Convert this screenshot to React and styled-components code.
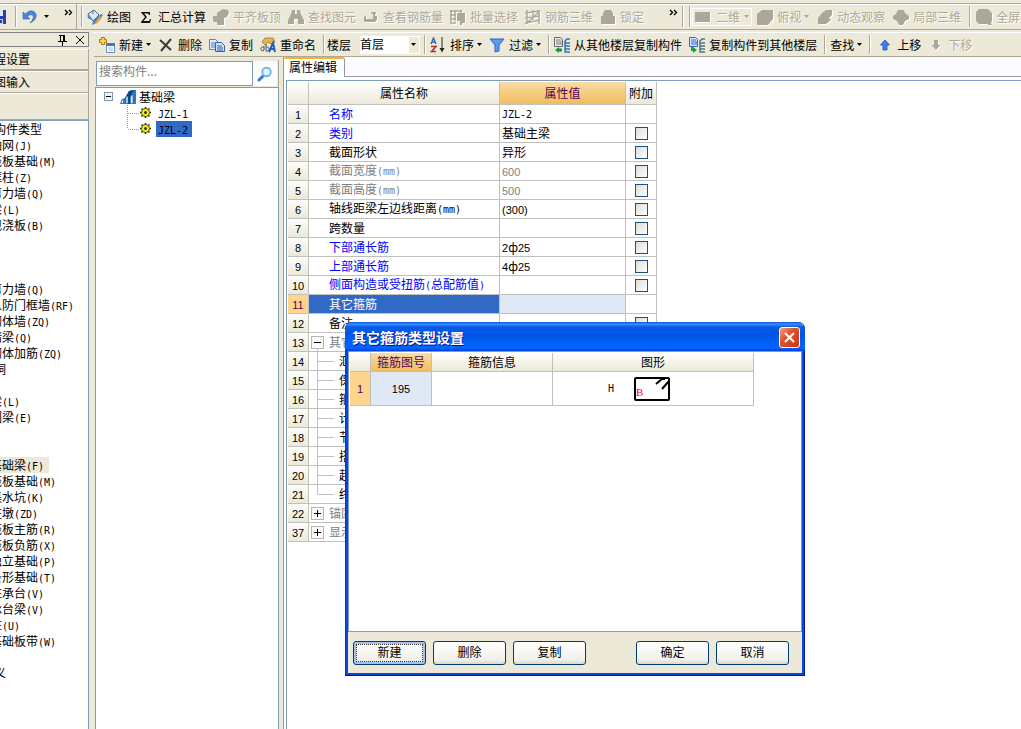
import React from "react";
import styled, { createGlobalStyle, css } from "styled-components";

const face = "#ece9d8";
const shade = "#aca899";
const edge = "#7f9db9";
const grid = "#c0c0c0";
const mute = "#808080";

const GlobalStyle = createGlobalStyle`
  * { box-sizing: border-box; }
  body {
    margin: 0;
    background: ${face};
    color: #000;
    font: 12px/16px "Noto Sans CJK SC", sans-serif;
    overflow: hidden;
  }
  button, input, select { font: inherit; color: inherit; margin: 0; }
`;

const Page = styled.div`
  position: relative;
  display: flex;
  flex-direction: column;
  height: 100vh;
  overflow: hidden;
`;

/* ---------- text ---------- */

const Latin = styled.span`
  font-family: "DejaVu Sans Mono", monospace;
  font-size: 10px;
`;

const Num = styled.span`
  font-family: "Liberation Sans", sans-serif;
  font-size: 11px;
`;

function Mixed({ children }) {
  return children.split(/([\x21-\x7e]+)/).map((part, i) => {
    if (i % 2 === 0) return part;
    return /^[\d()]+$/.test(part) && /\d/.test(part)
      ? <Num key={i}>{part}</Num>
      : <Latin key={i}>{part}</Latin>;
  });
}

/* ---------- toolbars ---------- */

const TopBar = styled.header`
  display: flex;
  flex: none;
  height: 27px;
  margin-top: 3px;
  border-top: 1px solid ${shade};
  border-bottom: 1px solid ${shade};
  box-shadow: inset 0 1px #fff;
  overflow: hidden;
`;

const ToolBar = styled.div`
  display: flex;
  flex: none;
  align-items: center;
  height: 25px;
  padding-left: 1px;
  border-top: 1px solid #fff;
  border-bottom: 1px solid ${shade};
  overflow: hidden;
`;

const FileGroup = styled.div`
  display: flex;
  flex: none;
  align-items: center;
  width: 77px;
  padding-right: 3px;
  border-right: 1px solid ${shade};
  overflow: hidden;
`;

const ToolGroup = styled.div`
  display: flex;
  flex: none;
  align-items: center;
  padding-left: 4px;
`;

const Grip = styled.span`
  align-self: stretch;
  flex: none;
  width: 2px;
  margin: 2px 0;
  border-left: 1px solid ${shade};
  border-right: 1px solid #fff;
`;

const Sep = styled(Grip)`
  margin-left: 4px;
  margin-right: ${(p) => (p.$wide ? 2 : 0)}px;
`;

const ToolButton = styled.button`
  display: flex;
  flex: none;
  align-items: center;
  gap: 4px;
  height: 20px;
  padding: 0 3px 0 4px;
  border: 0;
  background: none;
  white-space: nowrap;
  line-height: 16px;
  ${(p) => p.disabled && css`
    color: ${shade};
    text-shadow: 1px 1px #fff;
  `}
  ${(p) => p.$framed && css`
    gap: 5px;
    height: 18px;
    padding: 0 2px;
    border: 1px solid #fff;
  `}
`;

const Save = styled(ToolButton)`
  margin-left: -13px;
  padding-right: 8px;
`;

const Undo = styled(ToolButton)`
  gap: 7px;
  padding-left: 5px;
`;

const Chevrons = styled.svg`
  flex: none;
  align-self: flex-start;
  margin: 5px 0 0 ${(p) => p.$space}px;
`;

const CaretMark = styled.svg`
  flex: none;
  margin-left: -1px;
`;

const Caret = () => (
  <CaretMark width="5" height="3" viewBox="0 0 5 3" aria-hidden="true">
    <path d="M0 0h5L2.500 3z" fill="currentColor" />
  </CaretMark>
);

const More = ({ space }) => (
  <Chevrons $space={space} width="9" height="7" viewBox="0 0 9 7" aria-hidden="true">
    <path d="M1 1l2.500 2.500L1 6M5 1l2.500 2.500L5 6" fill="none" stroke="#000" strokeWidth="1.400" />
  </Chevrons>
);

const art = {
  save: <><path d="M0 1h15v14H2L0 13z" fill="#2b3fa8" /><path d="M3 1h9v6H3z" fill="#dfe8fb" /><path d="M4 10h8v5H4z" fill="#c9cfe0" /><path d="M9 11h2v3H9z" fill="#2b3fa8" /></>,
  undo: <path d="M1 3v7h7L5.600 7.500C9 4 12.500 6 11 9.500 10.400 11.500 9 13 8 14 14 11.500 16 6 12.500 3 9.500 .8 6 2 3.500 5z" fill="#4a86d8" stroke="#2f62b5" strokeWidth=".6" />,
  paint: <><path d="M1 5l6-4 5 5-6 6z" fill="#dce9f7" stroke="#47698f" /><path d="M6 5V1" stroke="#47698f" /><path d="M1 5c-1 3 0 5 2 5l3 2z" fill="#5b87bd" /><path d="M14 5l2 1-6 8-5 2 1-4z" fill="#4f81c0" /><path d="M13 7l2 2-5 5-3 1z" fill="#e3a02f" /></>,
  sigma: <path d="M3 3h9v3h-1l-1-1.500H6L9 8l-3.500 4H11l1-2h1l-1 4H3v-1l4-5-4-4.500z" fill="#111" />,
  level: <path d="M0 7h4V4l6-4 5 1 1 3-2 4-3 1v7H4v-3H1l-1-1z" fill={shade} />,
  find: <path d="M4 1h3v4h2V1h3l1 4 3 6v4h-6v-5H6v5H0v-4l3-6z" fill={shade} />,
  bars: <path d="M1 8l2-2v4h7V5H8l1-2h4l-1 4h2v4l-2 2H2l-1-1z" fill={shade} />,
  batch: <><path d="M1 1v12M5 1v11M0 2h12M0 6h6M0 10h6M0 14h6M11 1v3" fill="none" stroke={shade} strokeWidth="1.500" /><path d="M7 4h8v10h-3v2h-2v-4H7z" fill={shade} /></>,
  mesh: <path d="M2 1v14M8 1v10M14 1v14M0 4l15-2M0 9l15-2M0 14l15-3M3 13L14 3" fill="none" stroke={shade} strokeWidth="1.500" />,
  lock: <path d="M1 7h2V4l2-3h6l2 3v3h2v8H1z" fill={shade} />,
  flat: <path d="M0 3h15v10H0z" fill={shade} />,
  box: <path d="M0 5l5-4h11v9l-5 6H0z" fill={shade} />,
  orbit: <path d="M1 9l4-5 4-3h6v5l-3 3 2 2-5 4H1z" fill={shade} />,
  part: <path d="M5 1h6l1 3 4 3v3l-4 2-2 4H6l-2-4-4-2V7l3-2z" fill={shade} />,
  full: <path d="M3 0h9l4 4v8l-1 2 1 2h-3l-2-1H3L0 12V3z" fill={shade} />,
  create: <><path d="M2.500 .5h3v2h2v3h-2v2h-3v-2h-2v-3h2z" fill="#f8d54a" stroke="#a77b10" /><path d="M7.500 6.500h8v9h-8z" fill="#fff" stroke="#6b8fc0" /><path d="M7 6h9v3H7z" fill="#3f79c4" /><path d="M9 11h5M9 13h5" stroke="#9bbbe0" /></>,
  remove: <path d="M2 3l11 10M13 2L3 14" stroke="#3b3b3b" strokeWidth="2" fill="none" />,
  copy: <><path d="M.5 2.500h6l3 3v7h-9z" fill="#dceafb" stroke="#5585c9" /><path d="M2 6h4M2 8h4M2 10h4" stroke="#5585c9" /><path d="M6.500 5.500h6l3 3v6h-9z" fill="#cfe2fa" stroke="#2f62b5" /><path d="M8 9h5M8 11h6M8 13h6" stroke="#2f62b5" /></>,
  rename: <><path d="M2 5l3-4h8l2 4-4 2-3-2-3 3z" fill="#e9b53d" stroke="#7a6a4a" strokeWidth=".7" /><path d="M4 10c-4-1-4 4-1 4l1-1v-4M6 7v7c4 1 4-5 0-4" fill="none" stroke="#555" /><path d="M9 15l4-9 2 9M10 12h5" fill="none" stroke="#1f5fc0" strokeWidth="2" /></>,
  sort: <><path d="M1 7l2.500-6L6 7M2 5h3" fill="none" stroke="#3c62b4" strokeWidth="1.400" /><path d="M1 9.500h5L1.500 14.500H6" fill="none" stroke="#a8343a" strokeWidth="1.500" /><path d="M12 0v13" stroke="#222" /><path d="M9.500 11h5L12 15.500z" fill="#222" /></>,
  filter: <path d="M1 2h14l-5 6v6l-4 1V8z" fill="#5b9bf0" stroke="#2c62c4" />,
  fromFloor: <><path d="M.5 .5h6l2 2v7h-8z" fill="#eee" stroke="#666" /><path d="M2 3h5M2 5h6M2 7h6" stroke="#777" /><path d="M16 2h-3l-2 2v11h5M11 6h5M11 9h5M11 12h5" fill="none" stroke="#3172bd" strokeWidth="1.500" /><path d="M1 13l4-3v1.500h3v3H5V16z" fill="#16943a" /></>,
  toFloor: <><path d="M.5 .5h6l2 2v7h-8z" fill="#d8e8ff" stroke="#3568bd" /><path d="M2 3h5M2 5h6M2 7h6" stroke="#3568bd" /><path d="M16 2h-3l-2 2v11h5M11 6h5M11 9h5M11 12h5" fill="none" stroke="#56718f" strokeWidth="1.500" /><path d="M2 10v4h2v2l4-3-4-3z" fill="#16a03a" /></>,
  up: <path d="M8 3l4.500 5H10v5H6V8H3.500z" fill="#3f7df0" stroke="#1c4fc0" strokeWidth=".8" />,
  down: <path d="M8 13L3.500 8H6V3h4v5h2.500z" fill={shade} />,
  lens: <><path d="M2 14l5-5" stroke="#3a78c8" strokeWidth="3" strokeLinecap="round" /><circle cx="9.500" cy="6" r="4.200" fill="#eaf6ff" stroke="#6db7ef" strokeWidth="2" /></>,
  beam: <><path d="M0 15l2-5 3-1 4-7 3-1h4v14z" fill="#2f7abf" /><path d="M5 9l4-7 5-1-4 7v7H8V9z" fill="#0d4683" /><path d="M1.500 14.500v-3l2-1V14.500zM6 14.500V8l2-1v7.500zM10.500 14.500V8l2.500-3v9.500z" fill="#e2f1fc" stroke="#155a9d" strokeWidth=".6" /></>,
  pin: <path d="M5 3.500h6M6.500 4v5M9.500 4v5M10.500 4v5M4 9.500h9M8.500 10v4" fill="none" stroke="#000" />,
  close: <path d="M4 4l8 8M12 4l-8 8" fill="none" stroke="#000" />,
};

const Glyph = styled.svg`
  flex: none;
  display: block;
  ${(p) => p.$off && "filter: drop-shadow(1px 1px 0 #fff);"}
`;

const Icon = ({ name, off }) => (
  <Glyph width="16" height="16" viewBox="0 0 16 16" $off={off} aria-hidden="true">{art[name]}</Glyph>
);

const Tool = ({ icon, label, off, menu, framed }) => (
  <ToolButton type="button" disabled={off} $framed={framed}>
    {icon && <Icon name={icon} off={off} />}
    {label}
    {menu && <Caret />}
  </ToolButton>
);

const ViewGroup = styled(ToolGroup)`
  gap: 1px;
`;

const FloorLabel = styled.label`
  display: flex;
  flex: none;
  align-items: center;
  gap: 9px;
  padding-left: 2px;
`;

const SelectBox = styled.span`
  position: relative;
  display: block;
  width: 60px;
  height: 18px;
`;

const Select = styled.select`
  appearance: none;
  display: block;
  width: 100%;
  height: 100%;
  padding: 0 14px 2px 0;
  border: 0;
  border-radius: 0;
  background: #fff;
`;

const SelectArrow = styled.span`
  position: absolute;
  top: 1px;
  right: 1px;
  display: grid;
  place-items: center;
  width: 10px;
  height: 16px;
  background: ${face};
  pointer-events: none;
`;

/* ---------- left navigation ---------- */

const Body = styled.div`
  display: flex;
  flex: 1;
  min-height: 0;
`;

const Side = styled.aside`
  display: flex;
  flex-direction: column;
  flex: none;
  width: 94px;
  padding: 2px 5px 0 0;
  overflow: hidden;
`;

const SideTitle = styled.div`
  display: flex;
  flex: none;
  justify-content: flex-end;
  align-items: center;
  gap: 2px;
  height: 15px;
  border: solid ${mute};
  border-width: 1px 1px 1px 0;
  margin-bottom: 2px;
`;

const PlainButton = styled.button`
  display: block;
  padding: 0;
  border: 0;
  background: none;
`;

const SideButton = styled.button`
  flex: none;
  height: ${(p) => (p.$tall ? 27 : 22)}px;
  padding: 0;
  border: solid ${shade};
  border-width: 0 1px ${(p) => (p.$strong ? 2 : 1)}px 0;
  box-shadow: inset 0 1px #fff;
  background: ${face};
  text-align: left;
  text-indent: -6px;
  line-height: 16px;
`;

const KindList = styled.ul`
  flex: 1;
  margin: 0;
  padding: 0;
  list-style: none;
  border: solid ${edge};
  border-width: 1px 1px 0 0;
  background: #fff;
  overflow: hidden;
`;

const Kind = styled.li`
  width: fit-content;
  height: 16px;
  margin-left: ${(p) => (p.$root ? -6 : -10)}px;
  padding-right: 5px;
  white-space: nowrap;
  background: ${(p) => (p.$on ? face : "none")};
`;

const kinds = [
  "#构件类型", "轴网(J)", "筏板基础(M)", "框柱(Z)", "剪力墙(Q)", "梁(L)", "现浇板(B)",
  "", "", "", "剪力墙(Q)", "人防门框墙(RF)", "砌体墙(ZQ)", "暗梁(Q)", "砌体加筋(ZQ)", "#洞",
  "", "梁(L)", "圈梁(E)", "", "", "基础梁(F)", "筏板基础(M)", "集水坑(K)", "柱墩(ZD)",
  "筏板主筋(R)", "筏板负筋(X)", "独立基础(P)", "条形基础(T)", "桩承台(V)", "承台梁(V)",
  "桩(U)", "基础板带(W)", "", "#义",
];

/* ---------- component tree ---------- */

const Main = styled.main`
  display: flex;
  flex-direction: column;
  flex: 1;
  min-width: 0;
  padding-top: 2px;
`;

const Split = styled.div`
  display: flex;
  flex: 1;
  min-height: 0;
`;

const Explorer = styled.section`
  display: flex;
  flex-direction: column;
  flex: none;
  width: 184px;
  margin: 3px 4px 0 1px;
`;

const SearchRow = styled.div`
  display: flex;
  flex: none;
  height: 27px;
  padding: 1px;
  border-right: 1px solid ${shade};
`;

const Search = styled.input`
  flex: 1;
  min-width: 0;
  padding: 0 2px 5px;
  border: 1px solid ${edge};
  border-radius: 0;
  background: #fff;
  &::placeholder { color: ${mute}; opacity: 1; }
`;

const SearchButton = styled(PlainButton)`
  display: grid;
  place-items: center;
  width: 24px;
  background: #fbfcfe;
`;

const Tree = styled.div`
  flex: 1;
  padding: 0 0 0 8px;
  border: solid ${edge};
  border-width: 1px 1px 0;
  background: #fff;
`;

const TreeRoot = styled.div`
  display: flex;
  align-items: center;
  height: 17px;
  gap: 3px;
`;

const Fold = styled.svg`
  flex: none;
  margin-right: 4px;
`;

const Branch = styled.ul`
  margin: 0 0 0 22px;
  padding: 0;
  list-style: none;
`;

const Leaf = styled.li`
  display: flex;
  align-items: center;
  gap: 4px;
  height: 16px;
`;

const LeafName = styled.span`
  height: 16px;
  padding: 0 4px 0 2px;
  line-height: 15px;
  background: ${(p) => (p.$on ? "#316ac5" : "none")};
`;

const LeafMark = ({ last }) => (
  <svg width="26" height="16" viewBox="0 0 26 16" aria-hidden="true">
    <path d={last ? "M1.500 0v8M2 8.500h11" : "M1.500 0v16M2 8.500h11"} fill="none" stroke="#999" strokeDasharray="1 1" />
    <path d="M19.500 2v11M14 7.500h11M15.500 3.500l8 8M23.500 3.500l-8 8" stroke="#222" strokeWidth="1.600" />
    <circle cx="19.500" cy="7.500" r="4" fill="#f8f010" stroke="#5a5510" />
    <circle cx="19.500" cy="7.500" r="1.500" fill="#3a3600" />
  </svg>
);

/* ---------- property editor ---------- */

const Editor = styled.section`
  display: flex;
  flex-direction: column;
  flex: 1;
  min-width: 0;
  border-left: 1px solid #919b9c;
  background: #fff;
`;

const Tabs = styled.div`
  display: flex;
  flex: none;
  height: 20px;
  border-bottom: 1px solid #919b9c;
  background: #fcfcfe;
`;

const Tab = styled.button`
  height: 20px;
  padding: 0 7px 2px 5px;
  border: 0;
  border-top: 2px solid #f9b032;
  border-right: 1px solid #919b9c;
  border-radius: 2px 3px 0 0;
  background: #fff;
  line-height: 14px;
`;

const Sheet = styled.div`
  flex: 1;
  margin: 3px 0 0 2px;
  padding: 1px 0 0 1px;
  border: solid ${edge};
  border-width: 1px 0 0 1px;
  overflow: hidden;
`;

const Table = styled.table`
  table-layout: fixed;
  width: ${(p) => p.$width}px;
  border-spacing: 0;
  th, td {
    padding: 0;
    border-right: 1px solid ${grid};
    border-bottom: 1px solid ${grid};
    font-weight: normal;
    line-height: 16px;
    white-space: nowrap;
    overflow: hidden;
  }
`;

const Col = styled.col`
  width: ${(p) => p.$w}px;
`;

const Head = styled.th`
  height: ${(p) => p.$h}px;
  color: ${(p) => (p.$hot ? "#5a0050" : "#000")};
  background: ${(p) => (p.$hot
    ? "linear-gradient(#f9dca8, #f0bd5c)"
    : `linear-gradient(#fff, ${face})`)};
`;

const RowHead = styled.th`
  height: ${(p) => p.$h || 19}px;
  color: ${(p) => (p.$hot ? "#5a0050" : "#000")};
  background: ${(p) => (p.$hot ? "#ffd48c" : `linear-gradient(#fdfdfb, ${face})`)};
`;

const tones = { blue: "#0000ff", gray: mute, white: "#fff" };

const NameCell = styled.td`
  height: 19px;
  color: ${(p) => tones[p.$tone] || "#000"};
  background: ${(p) => (p.$tone === "white" ? "#316ac5" : "#fff")};
`;

const NameLine = styled.div`
  display: flex;
  align-items: center;
  height: 18px;
  padding-left: ${(p) => (p.$plain ? 20 : 0)}px;
`;

const ValueCell = styled.td`
  && { padding-left: 2px; }
  color: ${(p) => tones[p.$tone] || "#000"};
  background: ${(p) => (p.$on ? "#dfe8f5" : "#fff")};
`;

const CheckCell = styled.td`
  text-align: center;
`;

const Check = styled.input`
  appearance: none;
  display: block;
  width: 13px;
  height: 13px;
  margin: 0 auto;
  border: 1px solid #1c5180;
  background: linear-gradient(135deg, #dcdcd7, #fff);
`;

const Gutter = ({ kind }) => {
  const w = kind === "item" || kind === "last" ? 30 : 20;
  return (
    <svg width={w} height="18" viewBox={`0 0 ${w} 18`} aria-hidden="true">
      {w === 20 ? (
        <>
          <rect x="2.500" y="3.500" width="12" height="12" fill="#fafaf7" stroke="#b5b5b5" />
          <path d={kind === "plus" ? "M5 9.500h7M8.500 6v7" : "M5 9.500h7"} stroke="#000" />
          {kind === "minus" && <path d="M8.500 16v2" stroke={grid} />}
        </>
      ) : (
        <path d={kind === "item" ? "M8.500 0v18M9 9.500h16" : "M8.500 0v9.500H25"} fill="none" stroke={grid} />
      )}
    </svg>
  );
};

const rows = [
  { n: 1, name: "名称", tone: "blue", value: "JZL-2", noCheck: true },
  { n: 2, name: "类别", tone: "blue", value: "基础主梁" },
  { n: 3, name: "截面形状", value: "异形" },
  { n: 4, name: "截面宽度(mm)", tone: "gray", value: "600" },
  { n: 5, name: "截面高度(mm)", tone: "gray", value: "500" },
  { n: 6, name: "轴线距梁左边线距离(mm)", value: "(300)" },
  { n: 7, name: "跨数量", value: "" },
  { n: 8, name: "下部通长筋", tone: "blue", value: "2ф25" },
  { n: 9, name: "上部通长筋", tone: "blue", value: "4ф25" },
  { n: 10, name: "侧面构造或受扭筋(总配筋值)", tone: "blue", value: "" },
  { n: 11, name: "其它箍筋", tone: "white", value: "", on: true, noCheck: true },
  { n: 12, name: "备注", value: "" },
  { n: 13, name: "其它", tone: "gray", kind: "minus", noCheck: true },
  { n: 14, name: "汇", kind: "item" },
  { n: 15, name: "保", kind: "item" },
  { n: 16, name: "箍", kind: "item" },
  { n: 17, name: "计", kind: "item" },
  { n: 18, name: "节", kind: "item" },
  { n: 19, name: "搭", kind: "item" },
  { n: 20, name: "起", kind: "item" },
  { n: 21, name: "终", kind: "last" },
  { n: 22, name: "锚固", tone: "gray", kind: "plus", noCheck: true },
  { n: 37, name: "显示", tone: "gray", kind: "plus", noCheck: true },
];

/* ---------- dialog ---------- */

const Dialog = styled.section`
  position: absolute;
  left: 345px;
  top: 322px;
  display: flex;
  flex-direction: column;
  width: 460px;
  height: 354px;
  padding: 0 3px 3px;
  border-radius: 7px 7px 0 0;
  background: #0a46e0;
  box-shadow: inset -1px -1px #00138c, inset 1px 0 #0831d9;
`;

const TitleBar = styled.div`
  display: flex;
  flex: none;
  align-items: center;
  justify-content: space-between;
  height: 29px;
  margin: 0 -3px;
  padding: 1px 5px 0 7px;
  border-radius: 7px 7px 0 0;
  background: linear-gradient(#0a4fd0 0, #3a92ff 2px, #0a5be8 5px, #0054e3 12px, #0062f8 22px, #0066ff 26px, #003dd7 29px);
`;

const Title = styled.h2`
  margin: 0;
  color: #fff;
  font-size: 14px;
  font-weight: bold;
  line-height: 16px;
  text-shadow: 1px 1px #0f1089;
`;

const CloseButton = styled.button`
  display: grid;
  place-items: center;
  width: 21px;
  height: 21px;
  padding: 0;
  border: 1px solid #fff;
  border-radius: 3px;
  background: linear-gradient(135deg, #f0a088, #e0502c 40%, #c8380c);
`;

const DialogSheet = styled.div`
  flex: 1;
  padding: 1px 0 0 1px;
  border: 1px solid ${edge};
  background: #fff;
`;

const NumberCell = styled.td`
  text-align: center;
  background: #dfe8f5;
`;

const ShapeLine = styled.div`
  display: flex;
  align-items: center;
  justify-content: center;
  gap: 20px;
  padding-right: 28px;
`;

const DialogFooter = styled.div`
  display: flex;
  flex: none;
  justify-content: space-between;
  align-items: flex-start;
  height: 41px;
  padding: 9px 13px 0 5px;
  background: ${face};
`;

const ButtonSet = styled.div`
  display: flex;
  gap: 7px;
`;

const PushButton = styled.button`
  width: 73px;
  height: 24px;
  padding: 0 0 2px;
  border: 1px solid #003c74;
  border-radius: 3px;
  background: linear-gradient(#fff, #f1f0ea 80%, #dcd8cc);
  line-height: 16px;
  ${(p) => p.$default && css`
    box-shadow: inset 0 0 0 2px #a6c0f0, inset 0 -2px #6982ee;
    outline: 1px dotted #333;
    outline-offset: -4px;
  `}
`;

export default function App() {
  return (
    <Page>
      <GlobalStyle />
      <TopBar>
        <FileGroup>
          <Save type="button" aria-label="保存"><Icon name="save" /></Save>
          <Grip />
          <Undo type="button" aria-label="撤销"><Icon name="undo" /><Caret /></Undo>
          <More space={12} />
        </FileGroup>
        <ToolGroup>
          <Grip />
          <Tool icon="paint" label="绘图" />
          <Tool icon="sigma" label="汇总计算" />
          <Tool icon="level" label="平齐板顶" off />
          <Tool icon="find" label="查找图元" off />
          <Tool icon="bars" label="查看钢筋量" off />
          <Tool icon="batch" label="批量选择" off />
          <Tool icon="mesh" label="钢筋三维" off />
          <Tool icon="lock" label="锁定" off />
          <More space={22} />
        </ToolGroup>
        <ViewGroup>
          <Grip />
          <Sep />
          <Tool icon="flat" label="二维" off menu framed />
          <Tool icon="box" label="俯视" off menu />
          <Tool icon="orbit" label="动态观察" off />
          <Tool icon="part" label="局部三维" off />
          <Sep />
          <Tool icon="full" label="全屏" off />
        </ViewGroup>
      </TopBar>
      <Body>
        <Side>
          <SideTitle>
            <PlainButton type="button" aria-label="固定"><Icon name="pin" /></PlainButton>
            <PlainButton type="button" aria-label="关闭面板"><Icon name="close" /></PlainButton>
          </SideTitle>
          <SideButton type="button" $strong>程设置</SideButton>
          <SideButton type="button">图输入</SideButton>
          <SideButton type="button" $tall aria-label="构件" />
          <KindList>
            {kinds.map((k, i) => (
              <Kind key={i} $root={k[0] === "#"} $on={i === 21}>
                <Mixed>{k.replace("#", "")}</Mixed>
              </Kind>
            ))}
          </KindList>
        </Side>
        <Main>
          <ToolBar>
            <Tool icon="create" label="新建" menu />
            <Tool icon="remove" label="删除" />
            <Tool icon="copy" label="复制" />
            <Tool icon="rename" label="重命名" />
            <Sep />
            <FloorLabel>
              楼层
              <SelectBox>
                <Select defaultValue="首层"><option>首层</option></Select>
                <SelectArrow><Caret /></SelectArrow>
              </SelectBox>
            </FloorLabel>
            <Sep />
            <Tool icon="sort" label="排序" menu />
            <Tool icon="filter" label="过滤" menu />
            <Sep />
            <Tool icon="fromFloor" label="从其他楼层复制构件" />
            <Tool icon="toFloor" label="复制构件到其他楼层" />
            <Sep />
            <Tool label="查找" menu />
            <Sep $wide />
            <Tool icon="up" label="上移" />
            <Tool icon="down" label="下移" off />
          </ToolBar>
          <Split>
            <Explorer>
              <SearchRow>
                <Search type="text" placeholder="搜索构件..." aria-label="搜索构件" />
                <SearchButton type="button" aria-label="搜索"><Icon name="lens" /></SearchButton>
              </SearchRow>
              <Tree>
                <TreeRoot>
                  <Fold width="9" height="9" viewBox="0 0 9 9" aria-hidden="true">
                    <rect x=".5" y=".5" width="8" height="8" fill="#f6f5ef" stroke="#7898b5" />
                    <path d="M2 4.500h5" stroke="#000" />
                  </Fold>
                  <Icon name="beam" />
                  基础梁
                </TreeRoot>
                <Branch>
                  <Leaf><LeafMark /><LeafName><Mixed>JZL-1</Mixed></LeafName></Leaf>
                  <Leaf><LeafMark last /><LeafName $on><Mixed>JZL-2</Mixed></LeafName></Leaf>
                </Branch>
              </Tree>
            </Explorer>
            <Editor>
              <Tabs><Tab type="button">属性编辑</Tab></Tabs>
              <Sheet>
                <Table $width={369}>
                  <colgroup><Col $w={21} /><Col $w={191} /><Col $w={126} /><Col $w={31} /></colgroup>
                  <thead>
                    <tr>
                      <Head $h={23} />
                      <Head $h={23}>属性名称</Head>
                      <Head $h={23} $hot>属性值</Head>
                      <Head $h={23}>附加</Head>
                    </tr>
                  </thead>
                  <tbody>
                    {rows.map((r) => (
                      <tr key={r.n}>
                        <RowHead $hot={r.on}><Num>{r.n}</Num></RowHead>
                        <NameCell $tone={r.tone}>
                          <NameLine $plain={!r.kind}>
                            {r.kind && <Gutter kind={r.kind} />}
                            <span><Mixed>{r.name}</Mixed></span>
                          </NameLine>
                        </NameCell>
                        <ValueCell $tone={r.tone === "gray" ? "gray" : ""} $on={r.on}>
                          <Mixed>{r.value || ""}</Mixed>
                        </ValueCell>
                        <CheckCell>
                          {!r.noCheck && <Check type="checkbox" aria-label={`附加 ${r.name}`} />}
                        </CheckCell>
                      </tr>
                    ))}
                  </tbody>
                </Table>
              </Sheet>
            </Editor>
          </Split>
        </Main>
      </Body>
      <Dialog role="dialog" aria-labelledby="dialog-title">
        <TitleBar>
          <Title id="dialog-title">其它箍筋类型设置</Title>
          <CloseButton type="button" aria-label="关闭">
            <svg width="13" height="13" viewBox="0 0 13 13" aria-hidden="true">
              <path d="M2 2l9 9M11 2l-9 9" stroke="#fff" strokeWidth="2.200" />
            </svg>
          </CloseButton>
        </TitleBar>
        <DialogSheet>
          <Table $width={404}>
            <colgroup><Col $w={21} /><Col $w={61} /><Col $w={121} /><Col $w={201} /></colgroup>
            <thead>
              <tr>
                <Head $h={19} />
                <Head $h={19} $hot>箍筋图号</Head>
                <Head $h={19}>箍筋信息</Head>
                <Head $h={19}>图形</Head>
              </tr>
            </thead>
            <tbody>
              <tr>
                <RowHead $h={34} $hot><Num>1</Num></RowHead>
                <NumberCell><Num>195</Num></NumberCell>
                <td />
                <td>
                  <ShapeLine>
                    <Latin>H</Latin>
                    <svg width="36" height="24" viewBox="0 0 36 24" aria-hidden="true">
                      <rect x="1" y="1" width="34" height="22" rx="1" fill="none" stroke="#000" strokeWidth="2" />
                      <path d="M22 7l6-5h3M28 12l7-8" fill="none" stroke="#000" strokeWidth="2" />
                      <text x="2" y="19" fill="#f00" fontSize="11" fontFamily="Liberation Serif, serif">B</text>
                    </svg>
                  </ShapeLine>
                </td>
              </tr>
            </tbody>
          </Table>
        </DialogSheet>
        <DialogFooter>
          <ButtonSet>
            <PushButton type="button" $default>新建</PushButton>
            <PushButton type="button">删除</PushButton>
            <PushButton type="button">复制</PushButton>
          </ButtonSet>
          <ButtonSet>
            <PushButton type="button">确定</PushButton>
            <PushButton type="button">取消</PushButton>
          </ButtonSet>
        </DialogFooter>
      </Dialog>
    </Page>
  );
}
